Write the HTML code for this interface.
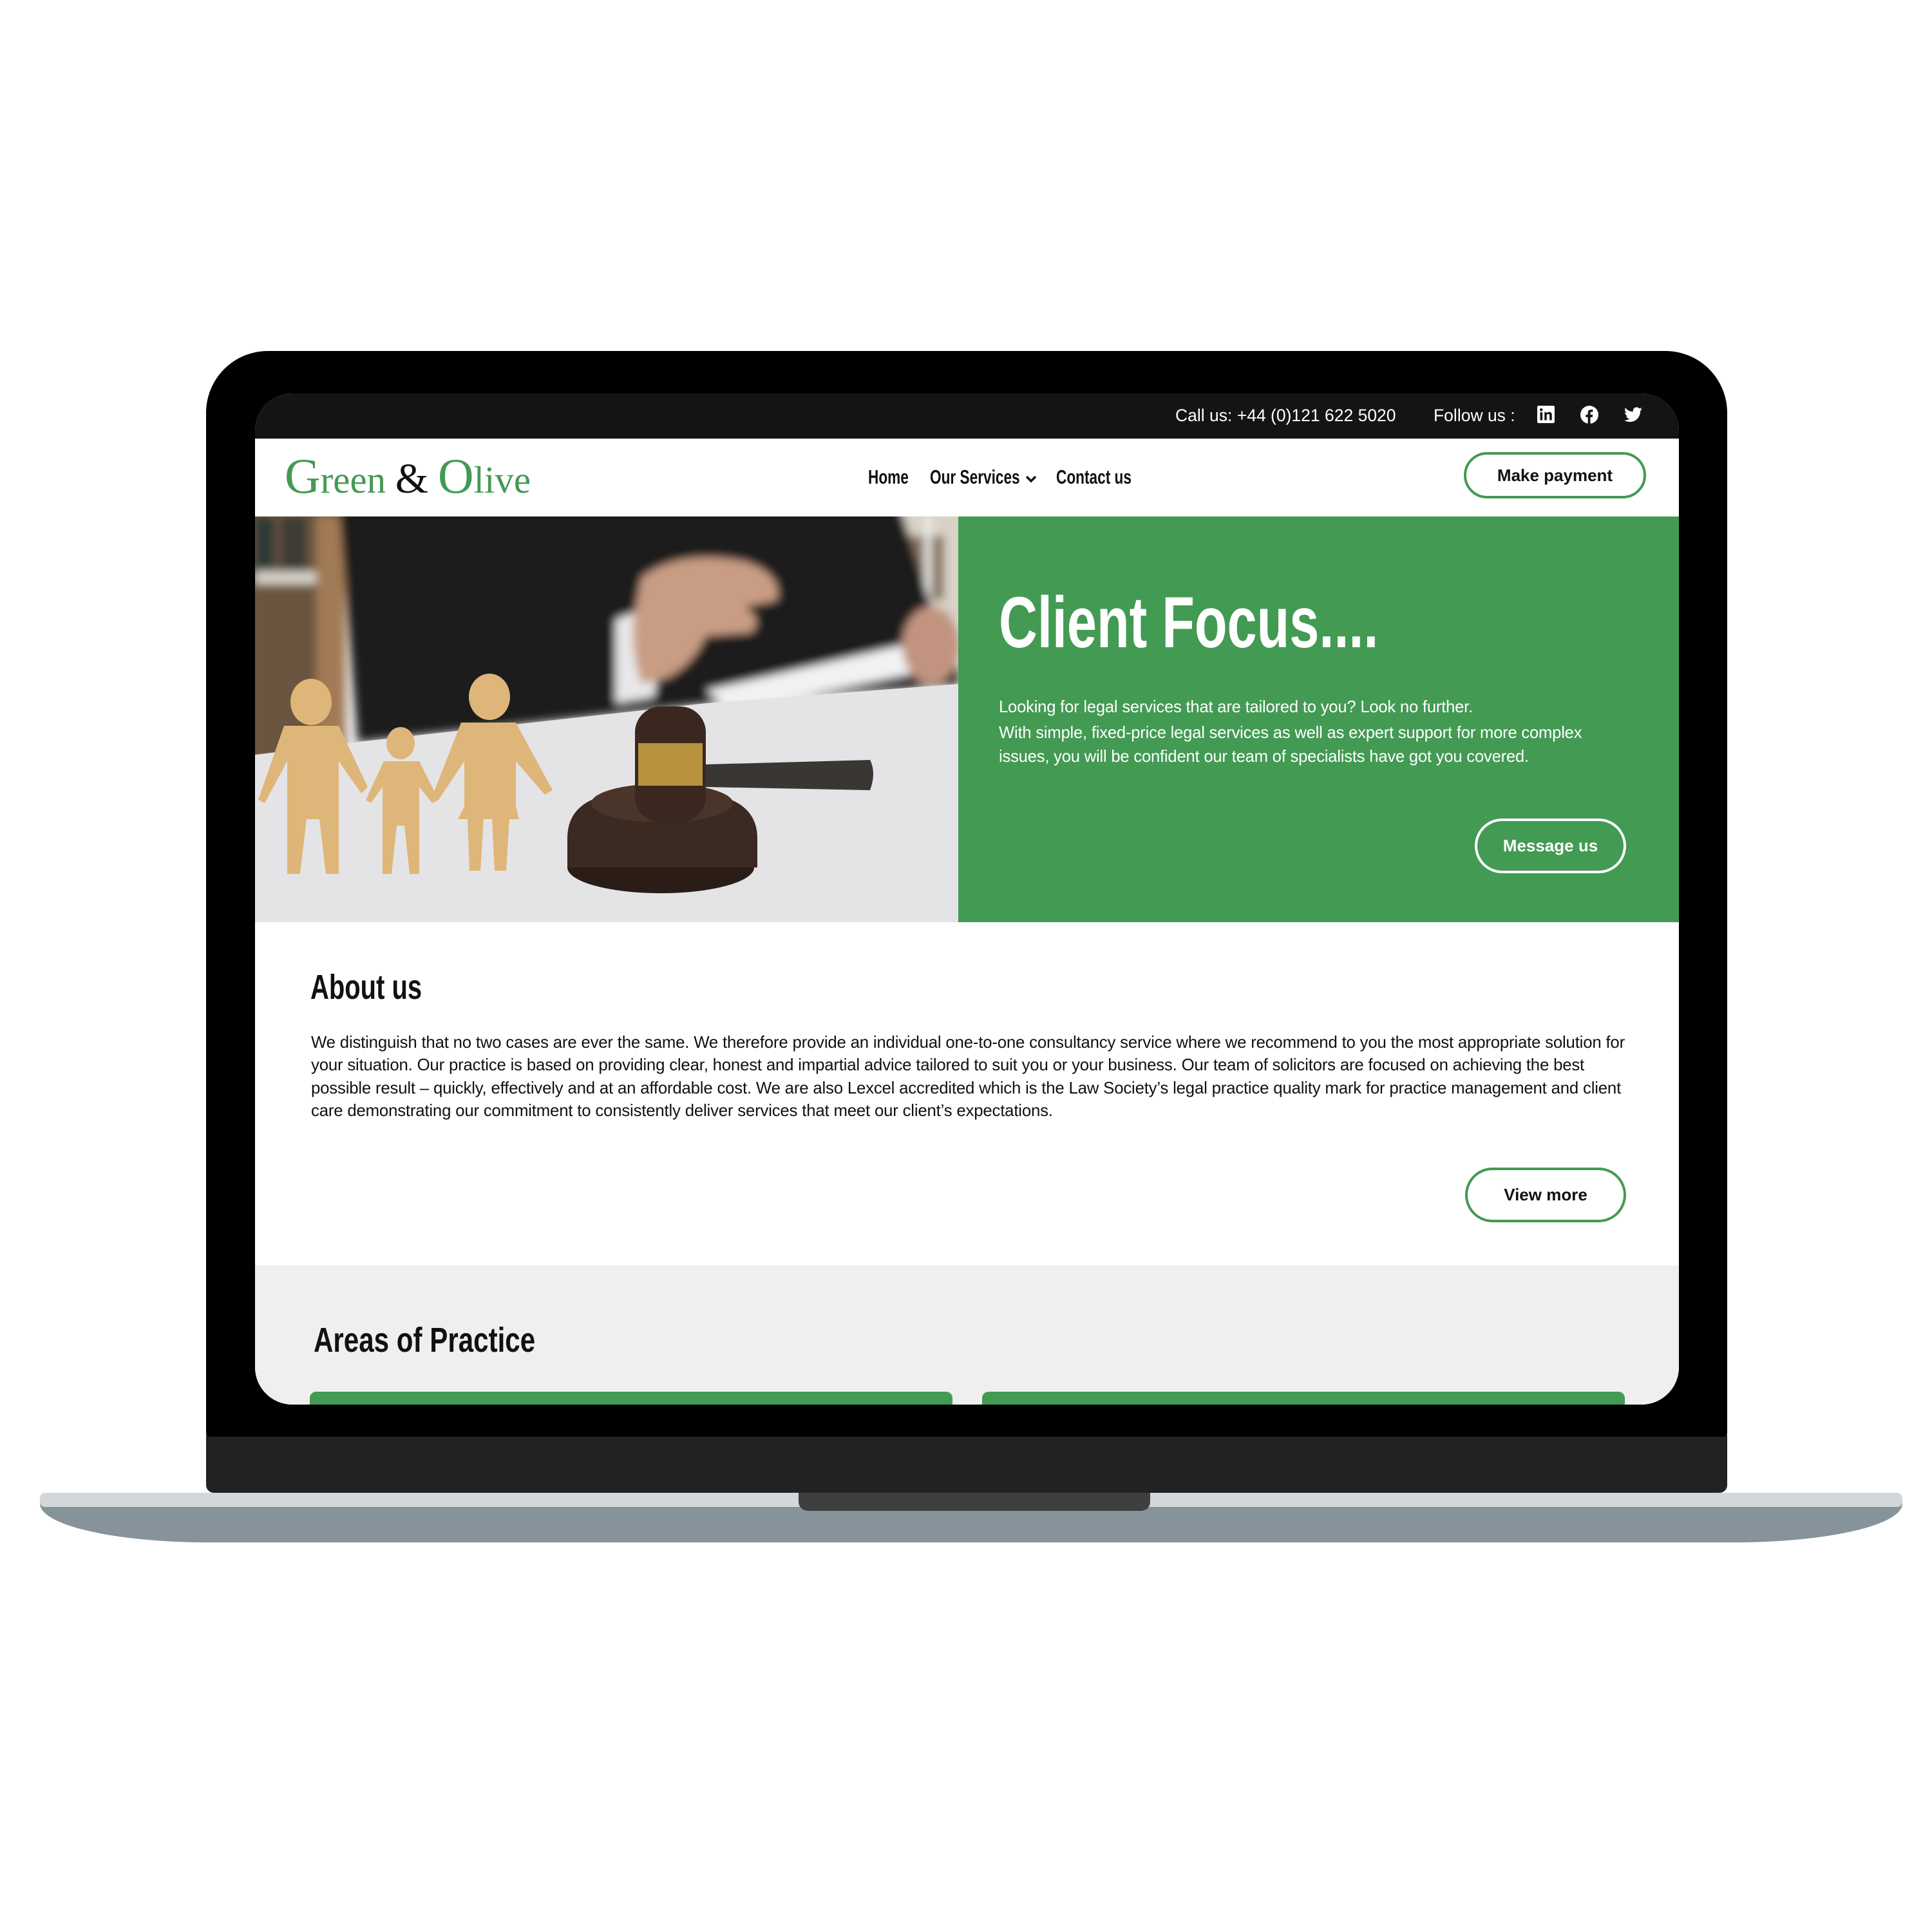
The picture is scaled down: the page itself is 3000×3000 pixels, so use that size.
<!DOCTYPE html>
<html><head><meta charset="utf-8"><style>
*{margin:0;padding:0;box-sizing:border-box}
body{width:3000px;height:3000px;background:#fff;position:relative;overflow:hidden;font-family:"Liberation Sans",sans-serif}
.abs{position:absolute}
.cond{display:inline-block;transform:scaleX(0.73);transform-origin:left center;font-weight:bold;white-space:nowrap}
.btn{position:absolute;border:4px solid #439a53;border-radius:60px;background:#fff;color:#111;font-weight:bold;font-size:26px;display:flex;align-items:center;justify-content:center}
.line{position:absolute;white-space:nowrap;font-size:25.8px;color:#111;letter-spacing:-0.2px}
</style></head><body>
<!-- base -->
<div class="abs" style="left:62px;top:2330px;width:2892px;height:65px;background:#87939a;border-radius:0 0 260px 260px/0 0 60px 60px"></div>
<div class="abs" style="left:62px;top:2318px;width:2892px;height:22px;background:#d3d7d9;border-radius:8px"></div>
<div class="abs" style="left:1240px;top:2318px;width:546px;height:28px;background:#3e3f3e;border-radius:0 0 14px 14px"></div>
<div class="abs" style="left:320px;top:2228px;width:2362px;height:90px;background:#222;border-radius:0 0 12px 12px"></div>
<!-- lid -->
<div class="abs" style="left:320px;top:545px;width:2362px;height:1686px;background:#000;border-radius:96px 96px 6px 6px"></div>
<!-- screen -->
<div class="abs" style="left:396px;top:611px;width:2211px;height:1570px;background:#fff;border-radius:58px;overflow:hidden">
 <div class="abs" style="left:0;top:0;width:2211px;height:70px;background:#141414"></div>
 <div class="abs" style="left:1429px;top:19px;color:#fff;font-size:26.5px;white-space:nowrap">Call us: +44 (0)121 622 5020</div>
 <div class="abs" style="left:1830px;top:19px;color:#fff;font-size:26.5px;white-space:nowrap">Follow us :</div>
 <svg class="abs" style="left:1991px;top:19px" width="27" height="27" viewBox="0 0 24 24"><rect width="24" height="24" rx="2" fill="#fff"/><rect x="4" y="9" width="3.2" height="11" fill="#141414"/><circle cx="5.6" cy="5.6" r="2" fill="#141414"/><path d="M10 9h3v1.6c.6-1 1.8-1.9 3.6-1.9 3 0 3.6 2 3.6 4.6V20h-3.2v-5.8c0-1.4-.2-2.8-1.9-2.8s-2 1.3-2 2.7V20H10z" fill="#141414"/></svg>
 <svg class="abs" style="left:2058px;top:19px" width="28" height="28" viewBox="0 0 24 24"><circle cx="12" cy="12" r="12" fill="#fff"/><path d="M13.3 24v-8.8h2.8l.4-3.3h-3.2V9.8c0-.9.3-1.6 1.6-1.6h1.7V5.3c-.3 0-1.3-.1-2.5-.1-2.5 0-4.1 1.5-4.1 4.2v2.5H7.2v3.3H10V24z" fill="#141414"/></svg>
 <svg class="abs" style="left:2126px;top:21px" width="28" height="24" viewBox="0 0 24 20"><path d="M24 2.4c-.9.4-1.8.6-2.8.8 1-.6 1.8-1.6 2.2-2.7-1 .6-2 1-3.1 1.2C19.3.7 18 0 16.6 0c-2.7 0-4.9 2.2-4.9 4.9 0 .4 0 .8.1 1.1C7.7 5.8 4.1 3.9 1.7.9c-.4.7-.7 1.6-.7 2.5 0 1.7.9 3.2 2.2 4.1-.8 0-1.6-.2-2.2-.6v.1c0 2.4 1.7 4.4 3.9 4.8-.4.1-.8.2-1.3.2-.3 0-.6 0-.9-.1.6 2 2.4 3.4 4.6 3.4-1.7 1.3-3.8 2.1-6.1 2.1-.4 0-.8 0-1.2-.1 2.2 1.4 4.8 2.2 7.5 2.2 9.1 0 14-7.5 14-14v-.6c1-.7 1.8-1.6 2.5-2.5z" fill="#fff"/></svg>
 <!-- nav -->
 <div class="abs" style="left:46px;top:90px;font-family:'Liberation Serif',serif;color:#439a53;white-space:nowrap;line-height:1"><span style="font-size:77px">G</span><span style="font-size:59px">reen </span><span style="font-size:66px;color:#111">&amp;</span><span style="font-size:59px"> </span><span style="font-size:77px">O</span><span style="font-size:59px">live</span></div>
 <div class="abs" style="left:952px;top:112px;font-size:31px;color:#111"><span class="cond">Home</span></div>
 <div class="abs" style="left:1048px;top:112px;font-size:31px;color:#111"><span class="cond">Our Services</span></div>
 <svg class="abs" style="left:1195px;top:126px" width="20" height="14" viewBox="0 0 20 14"><path d="M3 3l7 7 7-7" stroke="#111" stroke-width="3.5" fill="none"/></svg>
 <div class="abs" style="left:1244px;top:112px;font-size:31px;color:#111"><span class="cond">Contact us</span></div>
 <div class="btn" style="left:1877px;top:91px;width:283px;height:72px">Make payment</div>
 <!-- hero image -->
 <svg class="abs" style="left:0;top:191px" width="1092" height="630" viewBox="0 0 1092 630" preserveAspectRatio="none">
  <defs><filter id="b" x="-5%" y="-5%" width="110%" height="110%"><feGaussianBlur stdDeviation="7"/></filter></defs>
  <rect width="1092" height="630" fill="#e3e3e5"/>
  <g filter="url(#b)">
  <rect x="-20" y="-20" width="160" height="400" fill="#6b5440"/>
  <rect x="0" y="0" width="30" height="100" fill="#2a3a35"/><rect x="40" y="0" width="40" height="95" fill="#3c3a36"/>
  <rect x="0" y="85" width="140" height="20" fill="#d7d2c8"/>
  <rect x="95" y="0" width="45" height="380" fill="#a27a55"/>
  <rect x="860" y="-20" width="250" height="180" fill="#d9d2c6"/>
  <rect x="870" y="30" width="200" height="100" fill="#8a7460"/>
  <rect x="1040" y="0" width="10" height="160" fill="#eee"/>
  <path d="M130 -20H1000L1060 170L1092 230V260L700 290L160 350Z" fill="#1d1d1f"/>
  <path d="M560 160L640 130L620 280L560 290Z" fill="#e8e8ea"/>
  <path d="M600 95Q660 50 760 70Q820 90 810 130L760 140Q790 160 770 180L700 185Q680 230 640 250L600 260Q580 200 590 150Z" fill="#c99d84"/>
  <path d="M700 270L1092 180V230L740 300Z" fill="#f2f2f4"/>
  <ellipse cx="1050" cy="200" rx="45" ry="60" fill="#c29480"/>
  </g>
  <path d="M0 370L160 350L700 290L1092 260V630H0Z" fill="#e4e4e6"/>
  <g fill="#dfb679">
   <ellipse cx="87" cy="288" rx="32" ry="36"/><path d="M45 325H130L175 420L165 430L130 380V555H110L100 470H80L70 555H50V380L15 445L5 440Z"/>
   <ellipse cx="226" cy="352" rx="22" ry="25"/><path d="M200 380H255L285 440L275 445L255 420V555H240L232 480H220L212 555H198V420L180 445L172 440Z"/>
   <ellipse cx="364" cy="280" rx="32" ry="36"/><path d="M320 320H405L462 425L450 432L405 380V450L410 470H395L390 550H372L368 470H355L350 550H333L330 470H315L325 450V380L285 440L275 435Z"/>
  </g>
  <ellipse cx="630" cy="545" rx="145" ry="40" fill="#2a1d18"/>
  <path d="M485 500Q485 440 560 430H700Q780 440 780 500V545H485Z" fill="#3b2a22"/>
  <ellipse cx="632" cy="445" rx="110" ry="30" fill="#4a352a"/>
  <path d="M700 385L955 378Q965 398 955 425L700 420Z" fill="#3a3633"/>
  <rect x="590" y="295" width="110" height="180" rx="40" fill="#3a2820"/>
  <rect x="595" y="352" width="100" height="66" fill="#b8923e"/>
 </svg>
 <!-- green hero -->
 <div class="abs" style="left:1092px;top:191px;width:1119px;height:630px;background:#439a53"></div>
 <div class="abs" style="left:1155px;top:300px;font-size:112px;color:#fff;line-height:1"><span class="cond" style="transform:scaleX(0.74)">Client Focus....</span></div>
 <div class="line" style="left:1155px;top:473px;color:#fff;font-size:25.6px">Looking for legal services that are tailored to you? Look no further.</div>
 <div class="line" style="left:1155px;top:513px;color:#fff;font-size:25.6px">With simple, fixed-price legal services as well as expert support for more complex</div>
 <div class="line" style="left:1155px;top:550px;color:#fff;font-size:25.6px">issues, you will be confident our team of specialists have got you covered.</div>
 <div class="btn" style="left:1894px;top:660px;width:235px;height:85px;background:#439a53;border-color:#fff;color:#fff">Message us</div>
 <!-- about -->
 <div class="abs" style="left:86px;top:895px;font-size:54px;color:#111;line-height:1"><span class="cond" style="transform:scaleX(0.74)">About us</span></div>
 <div class="line" style="left:87px;top:994px">We distinguish that no two cases are ever the same. We therefore provide an individual one-to-one consultancy service where we recommend to you the most appropriate solution for</div>
 <div class="line" style="left:87px;top:1029px">your situation. Our practice is based on providing clear, honest and impartial advice tailored to suit you or your business. Our team of solicitors are focused on achieving the best</div>
 <div class="line" style="left:87px;top:1065px">possible result – quickly, effectively and at an affordable cost. We are also Lexcel accredited which is the Law Society’s legal practice quality mark for practice management and client</div>
 <div class="line" style="left:87px;top:1100px">care demonstrating our commitment to consistently deliver services that meet our client’s expectations.</div>
 <div class="btn" style="left:1879px;top:1202px;width:250px;height:85px">View more</div>
 <!-- areas -->
 <div class="abs" style="left:0;top:1354px;width:2211px;height:300px;background:#efefef"></div>
 <div class="abs" style="left:91px;top:1443px;font-size:54px;color:#111;line-height:1"><span class="cond" style="transform:scaleX(0.78)">Areas of Practice</span></div>
 <div class="abs" style="left:85px;top:1550px;width:998px;height:40px;background:#439a53;border-radius:10px 10px 0 0"></div>
 <div class="abs" style="left:1129px;top:1550px;width:998px;height:40px;background:#439a53;border-radius:10px 10px 0 0"></div>
</div>
</body></html>
